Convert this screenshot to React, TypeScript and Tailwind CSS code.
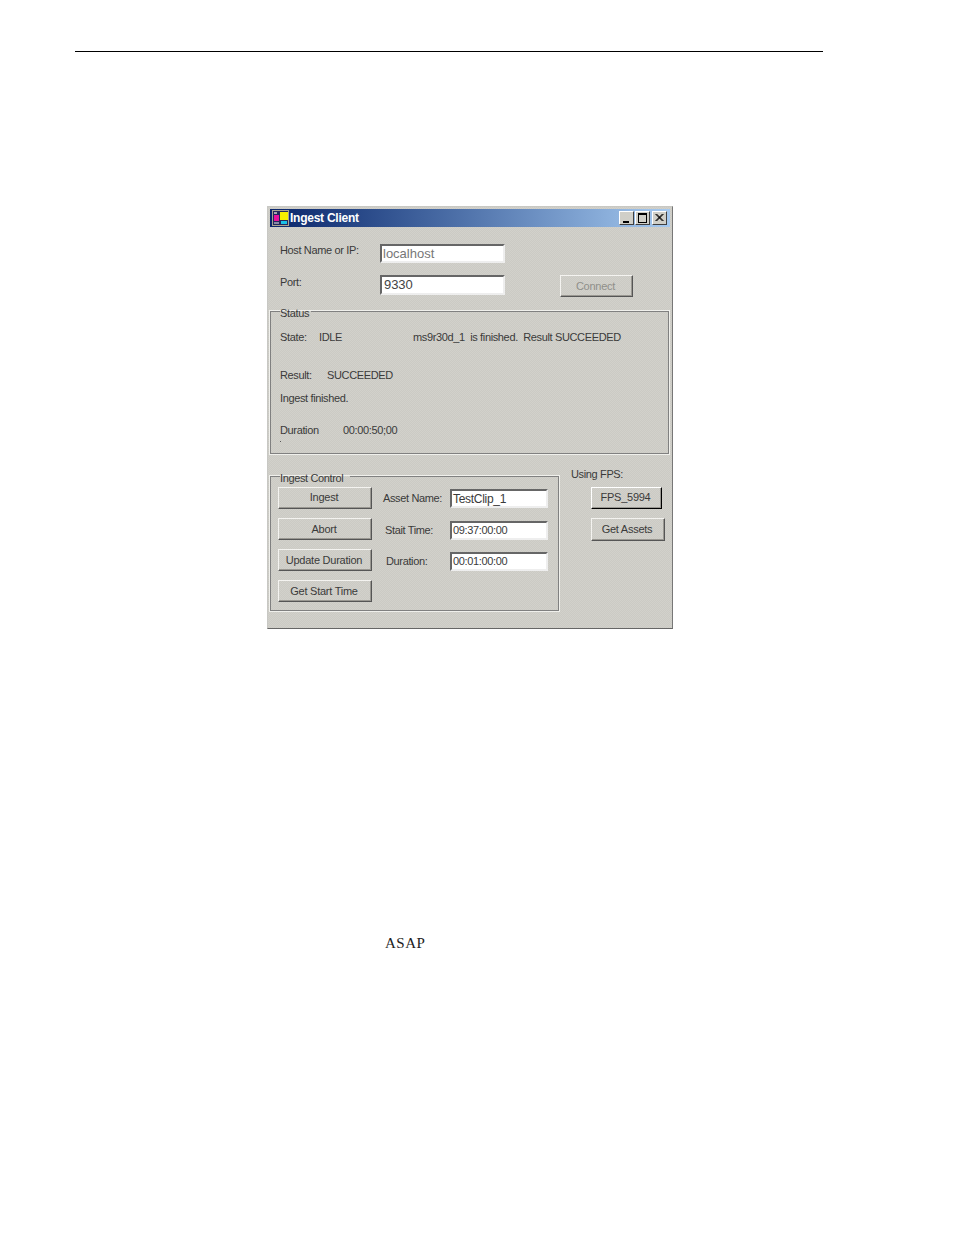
import React from 'react';

const sans = "font-['Liberation_Sans',Arial,sans-serif]";

const raised = 'border border-t-[#f4f3f0] border-l-[#f4f3f0] border-r-[#555555] border-b-[#555555] shadow-[inset_-1px_-1px_0_#9a9892]';
const sunken = 'border-2 border-t-[#666666] border-l-[#666666] border-r-[#eeeeee] border-b-[#eeeeee] bg-white';
const dither = 'bg-[conic-gradient(#d2d1cb_25%,#cbcac4_0_50%,#d2d1cb_0_75%,#cbcac4_0)] bg-[length:2px_2px]';

const Btn: React.FC<{ label: string; className?: string; disabled?: boolean }> = ({ label, className = '', disabled }) => (
  <div className={`${raised} flex items-center justify-center pr-[2px] tracking-[-0.25px] ${disabled ? 'text-[#8f8f8a]' : 'text-[#3a3a3a]'} ${className}`}>
    {label}
  </div>
);

const Field: React.FC<{ value: string; className?: string }> = ({ value, className = '' }) => (
  <div className={`${sunken} flex items-center pl-[1px] ${className}`}>{value}</div>
);

const AppIcon = () => (
  <svg width="17" height="16" viewBox="0 0 17 16" className="shrink-0">
    <rect x="0" y="0" width="17" height="16" fill="#a8a490" />
    <rect x="1" y="1" width="15" height="14" fill="#23285c" />
    <rect x="2" y="2" width="3" height="2" fill="#a8a8b0" />
    <rect x="2" y="5" width="5" height="6" fill="#e8109c" />
    <rect x="8" y="2" width="8" height="8" fill="#f6f000" />
    <rect x="9" y="11" width="6" height="3" fill="#18c0e8" />
    <rect x="2" y="12" width="5" height="2" fill="#8a8aa8" />
  </svg>
);

const CaptionBtn: React.FC<{ children: React.ReactNode; className?: string }> = ({ children, className = '' }) => (
  <div className={`w-[15px] h-[14px] bg-[#d0cfc8] border border-t-white border-l-white border-r-[#404040] border-b-[#404040] ${className}`}>
    <svg width="13" height="12" viewBox="0 0 13 12">{children}</svg>
  </div>
);

export default function App() {
  return (
    <div className={`w-[954px] h-[1235px] bg-white pt-[51px] ${sans}`}>
      <div className="ml-[75px] w-[748px] h-[1px] bg-black" />

      <div className={`ml-[267px] mt-[154px] w-[406px] h-[423px] ${dither} border border-t-[#c8c8c4] border-l-[#c8c8c4] border-r-[#777777] border-b-[#666666] px-[2px] pt-[2px] text-[11px] tracking-[-0.36px] text-[#3a3a3a]`}>
        <div className="h-[18px] flex items-center pl-[2px] pr-[3px] bg-gradient-to-r from-[#0a246a] to-[#a6caf0]">
          <AppIcon />
          <span className="ml-[1px] text-[12px] font-bold text-white tracking-[-0.25px]">Ingest Client</span>
          <div className="ml-auto flex">
            <CaptionBtn className="mr-[1px]"><rect x="3" y="9" width="6" height="2" fill="#000" /></CaptionBtn>
            <CaptionBtn className="mr-[2px]"><path d="M2 1.5h9M2 2.5h9M2.5 2v8M10.5 2v8M2 10.5h9" stroke="#000" fill="none" /></CaptionBtn>
            <CaptionBtn><path d="M2.5 2l7 7M3.5 2l7 7M9.5 2l-7 7M10.5 2l-7 7" stroke="#000" fill="none" /></CaptionBtn>
          </div>
        </div>

        <div className="mt-[17px] ml-[10px] flex items-center h-[19px]">
          <span className="w-[100px] -mt-[7px]">Host Name or IP:</span>
          <Field value="localhost" className="w-[125px] h-[19px] text-[#777777] text-[13px] tracking-normal" />
        </div>
        <div className="mt-[12px] ml-[10px] flex h-[22px]">
          <span className="w-[100px] leading-[14px]">Port:</span>
          <Field value="9330" className="w-[125px] h-[20px] !pl-[2px] text-[#444444] text-[13px] tracking-[-0.1px]" />
          <Btn label="Connect" disabled className="ml-[55px] w-[73px] h-[22px]" />
        </div>

        <fieldset className="mt-[8px] w-[399px] h-[149px] border border-[#808080] shadow-[0_0_0_1px_#f0f0ec] px-[9px] min-w-0">
          <legend className="pr-[2px] leading-[13px] translate-y-[2px]">Status</legend>
          <div className="mt-[11px] flex h-[16px] items-center">
            <span className="w-[39px]">State:</span>
            <span className="w-[94px]">IDLE</span>
            <span className="whitespace-pre">ms9r30d_1  is finished.  Result SUCCEEDED</span>
          </div>
          <div className="mt-[22px] flex h-[16px] items-center">
            <span className="w-[47px]">Result:</span>
            <span>SUCCEEDED</span>
          </div>
          <div className="mt-[7px] h-[16px] flex items-center">Ingest finished.</div>
          <div className="mt-[16px] h-[16px] flex items-center">
            <span className="w-[63px]">Duration</span>
            <span>00:00:50;00</span>
          </div>
          <div className="h-[1px] w-[1px] mt-[3px] bg-[#555555]" />
        </fieldset>

        <div className="mt-[16px] flex items-start">
          <fieldset className="w-[289px] h-[141px] border border-[#808080] shadow-[0_0_0_1px_#f0f0ec] min-w-0 px-[7px]">
            <legend className="ml-[2px] pr-[7px] leading-[13px] translate-y-[2px]">Ingest Control</legend>
            <div className="flex">
              <div className="w-[94px] flex flex-col gap-[9px] mt-[4px]">
                <Btn label="Ingest" className="h-[22px] pb-[1px]" />
                <Btn label="Abort" className="h-[22px]" />
                <Btn label="Update Duration" className="h-[22px]" />
                <Btn label="Get Start Time" className="h-[22px]" />
              </div>
              <div className="ml-[10px] mt-[6px] flex flex-col">
                <div className="flex items-center h-[19px]">
                  <span className="w-[68px] pl-[1px]">Asset Name:</span>
                  <Field value="TestClip_1" className="w-[98px] h-[19px] text-[12px] tracking-[-0.3px]" />
                </div>
                <div className="mt-[13px] flex items-center h-[19px]">
                  <span className="w-[68px] pl-[3px]">Stait Time:</span>
                  <Field value="09:37:00:00" className="w-[98px] h-[19px]" />
                </div>
                <div className="mt-[12px] flex items-center h-[19px]">
                  <span className="w-[68px] pl-[4px]">Duration:</span>
                  <Field value="00:01:00:00" className="w-[98px] h-[19px]" />
                </div>
              </div>
            </div>
          </fieldset>
          <div className="ml-[12px] -mt-[3px] flex flex-col">
            <span className="leading-[14px]">Using FPS:</span>
            <div className="ml-[20px] mt-[6px] flex flex-col gap-[9px]">
              <Btn label="FPS_5994" className="w-[71px] h-[22px] pb-[1px] !border-t-white !border-l-white !border-r-black !border-b-black shadow-[0_0_0_1px_#222222]" />
              <Btn label="Get Assets" className="w-[74px] h-[23px]" />
            </div>
          </div>
        </div>
      </div>

      <div className="mt-[306px] ml-[385px] font-['Liberation_Serif',serif] text-[15px] tracking-[0.5px] leading-[16px] text-[#222222]">ASAP</div>
    </div>
  );
}
